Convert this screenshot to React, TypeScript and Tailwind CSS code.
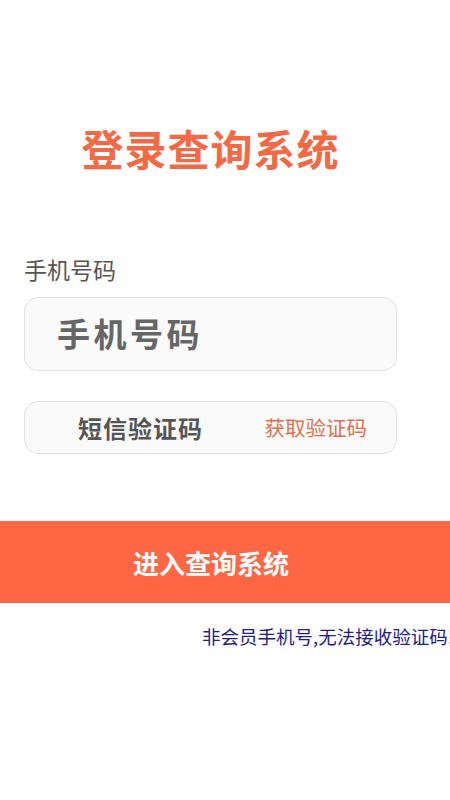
const font = { fontFamily: '"Noto Sans CJK SC", "Noto Sans", sans-serif' };

export default function App() {
  return (
    <div className="w-[450px] h-[800px] bg-white overflow-hidden" style={font}>
      <div className="px-6">
        <div className="w-[373px]">
          <h1 className="pt-[120px] h-[178px] text-center text-[42px] leading-[56px] font-bold text-[#f26a45] tracking-[1px]">
            登录查询系统
          </h1>
          <div className="mt-[79px] text-[23px] leading-[24px] text-[#555555]">手机号码</div>
          <div className="mt-[16px] h-[74px] rounded-[14px] border border-[#e2e2e2] bg-[#fafafa] flex items-center pl-[32px]">
            <span className="text-[33px] font-bold text-[#666666] tracking-[3.5px]">手机号码</span>
          </div>
          <div className="mt-[30px] h-[53px] rounded-[14px] border border-[#e2e2e2] bg-[#fafafa] flex items-center">
            <span className="ml-[53px] text-[24px] font-bold text-[#555555] tracking-[1px]">短信验证码</span>
            <span className="ml-auto mr-[29px] text-[20.5px] text-[#e0704f]">获取验证码</span>
          </div>
        </div>
      </div>
      <button className="mt-[67px] w-full h-[82px] bg-[#ff6643] flex items-center justify-center pr-[28px]">
        <span className="text-[26px] font-bold text-white">进入查询系统</span>
      </button>
      <div className="mt-[21px] pl-[202px] whitespace-nowrap text-[18.5px] leading-[24px] text-[#1c1c8c]">
        非会员手机号,无法接收验证码!
      </div>
    </div>
  );
}
